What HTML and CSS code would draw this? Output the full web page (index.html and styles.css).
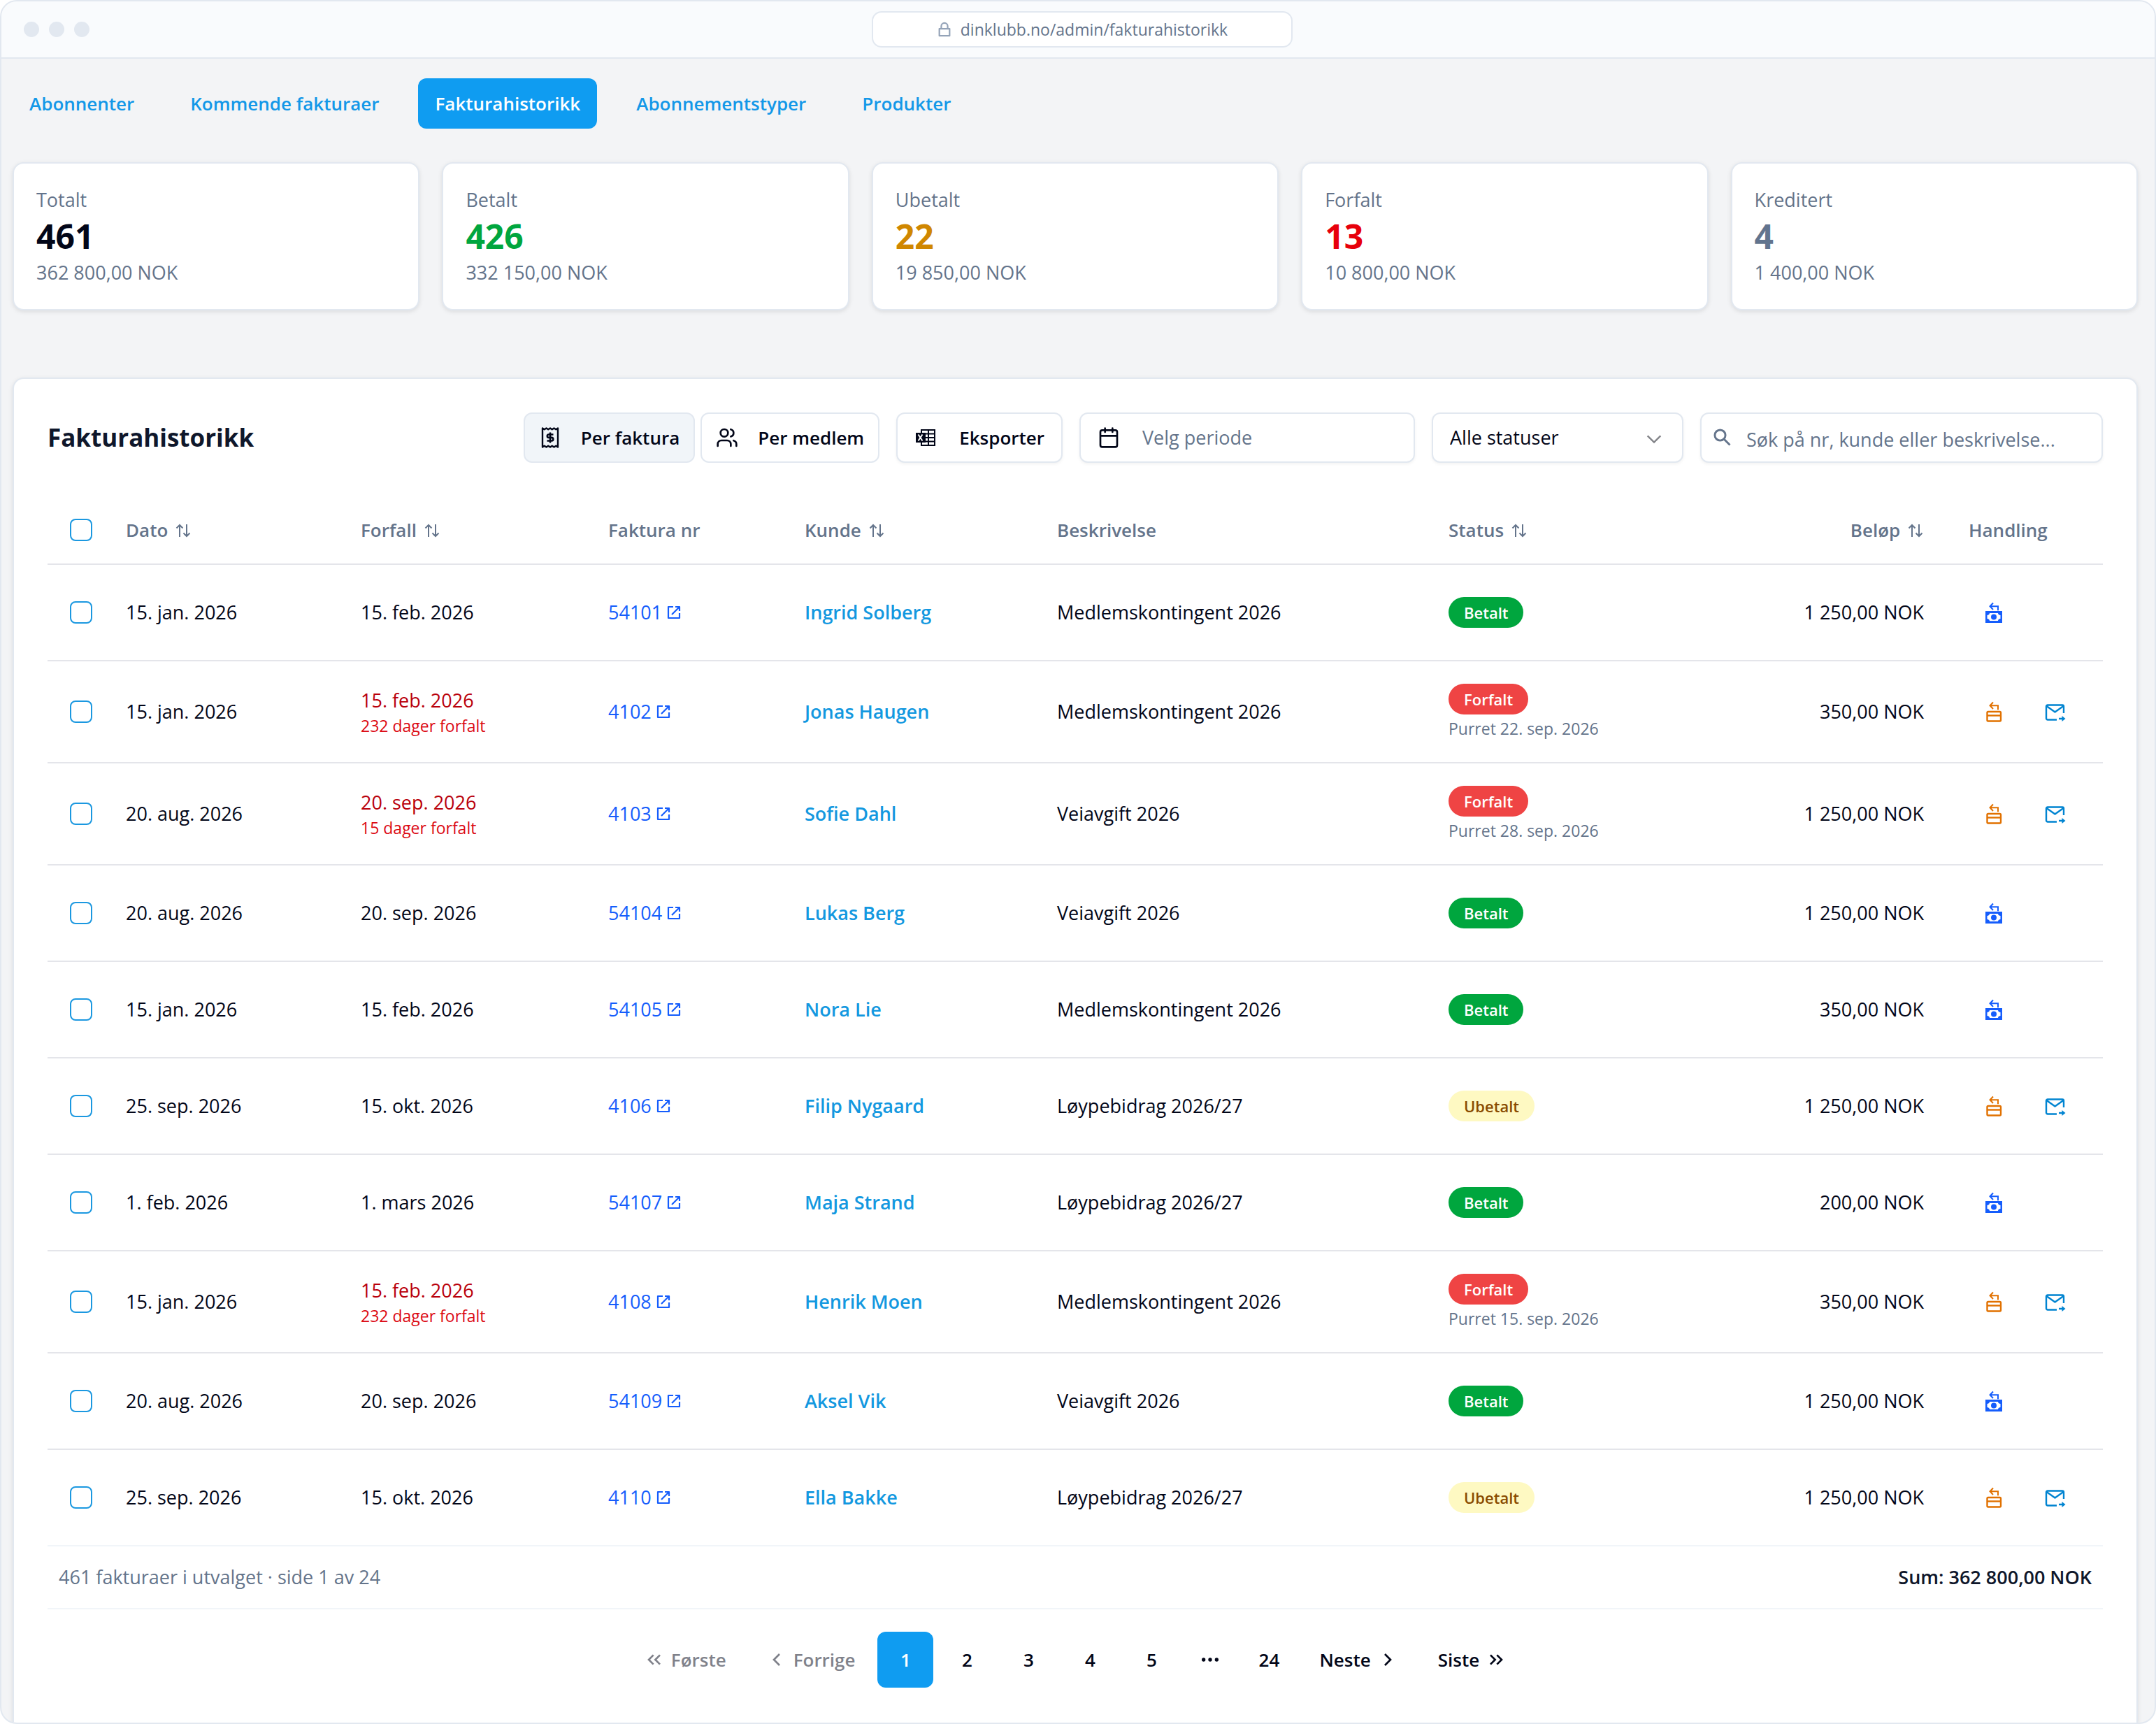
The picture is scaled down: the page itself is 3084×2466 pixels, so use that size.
FILE: index.html
```
<!DOCTYPE html>
<html lang="no">

<head>
    <meta charset="UTF-8">
    <meta name="viewport" content="width=device-width, initial-scale=1">
    <title>Fakturahistorikk</title>
    <link rel="stylesheet" href="styles.css">
</head>

<body>
    <!-- icons -->
    <svg class="sprite" aria-hidden="true">
        <symbol id="i-lock" viewBox="0 0 24 24"><path d="M4 11h16v11H4zM7 11V7a5 5 0 0 1 10 0v4" fill="none" stroke="currentColor" stroke-width="2.4" stroke-linejoin="round"/></symbol>
        <symbol id="i-receipt" viewBox="0 0 32 32"><g fill="none" stroke="currentColor" stroke-width="2.4" stroke-linejoin="round"><path d="M5 2.500l2.700 1.800L10.500 2.500l2.700 1.800L16 2.500l2.700 1.800 2.800-1.800 2.800 1.800L27 2.500v27l-2.700-1.800-2.800 1.800-2.800-1.800L16 29.500l-2.800-1.800-2.700 1.800-2.800-1.800L5 29.500z"/><path d="M20.500 11.500h-6.500a2.200 2.200 0 0 0 0 4.400h4a2.300 2.300 0 0 1 0 4.600h-6.500M16 8.500v15" stroke-width="2.600"/></g></symbol>
        <symbol id="i-users" viewBox="0 0 24 24"><g fill="none" stroke="currentColor" stroke-width="2" stroke-linecap="round" stroke-linejoin="round"><path d="M16 21v-2a4 4 0 0 0-4-4H6a4 4 0 0 0-4 4v2"/><circle cx="9" cy="7" r="4"/><path d="M22 21v-2a4 4 0 0 0-3-3.870M16 3.130a4 4 0 0 1 0 7.750"/></g></symbol>
        <symbol id="i-excel" viewBox="0 0 32 32"><path d="M10 5h19v22H10zM10 10.500h19M10 16h19M10 21.500h19M20 5v22" fill="none" stroke="currentColor" stroke-width="2"/><path d="M2 9h14v14H2z" fill="currentColor"/><path d="M5.500 11.500l6 9M11.500 11.500l-6 9" stroke="#fff" stroke-width="2"/></symbol>
        <symbol id="i-calendar" viewBox="0 0 24 24"><path d="M5 4h14a2 2 0 0 1 2 2v14a2 2 0 0 1-2 2H5a2 2 0 0 1-2-2V6a2 2 0 0 1 2-2zM3 10h18M8 2v4M16 2v4" fill="none" stroke="currentColor" stroke-width="2" stroke-linecap="round"/></symbol>
        <symbol id="i-down" viewBox="0 0 24 24"><path d="M4 8l8 8 8-8" fill="none" stroke="currentColor" stroke-width="2"/></symbol>
        <symbol id="i-search" viewBox="0 0 24 24"><g fill="none" stroke="currentColor" stroke-width="2.500"><circle cx="9" cy="9" r="6.500"/><path d="M13.500 13.500L21 21"/></g></symbol>
        <symbol id="i-sort" viewBox="0 0 24 24"><path d="M7 21V4M2.500 8.500L7 4l4.500 4.500M17 3v17M12.500 15.500L17 20l4.500-4.500" fill="none" stroke="currentColor" stroke-width="2"/></symbol>
        <symbol id="i-open" viewBox="0 0 24 24"><path d="M11 4H4v16h16v-7M14 4h6v6M20 4L9 15" fill="none" stroke="currentColor" stroke-width="2.200" stroke-linejoin="round"/></symbol>
        <symbol id="i-refund" viewBox="0 0 32 32"><path d="M15 2.500L10.500 7.300l4.500 4.700M10.500 7.300H22v6" fill="none" stroke="currentColor" stroke-width="2"/><path d="M4 14h24v17H4zM10 17c0 1.600-1.600 3-3.500 3v5c1.900 0 3.500 1.400 3.500 3h12c0-1.600 1.600-3 3.500-3v-5c-1.900 0-3.500-1.400-3.500-3z" fill="currentColor" fill-rule="evenodd"/><circle cx="16" cy="22.500" r="4" fill="currentColor"/></symbol>
        <symbol id="i-credit" viewBox="0 0 32 32"><path d="M15 2.500L10.500 7.300l4.500 4.700M10.500 7.300H22v6" fill="none" stroke="currentColor" stroke-width="2"/><rect x="6.500" y="16" width="19.500" height="13.500" rx="1.500" fill="none" stroke="currentColor" stroke-width="2.400"/><path d="M6 21.500h20" stroke="currentColor" stroke-width="2.400"/></symbol>
        <symbol id="i-mail" viewBox="0 0 32 32"><path d="M18 27.500H5a2 2 0 0 1-2-2v-17a2 2 0 0 1 2-2h21a2 2 0 0 1 2 2V18M3.500 8L15.500 16.500 27.500 8M21 26h5" fill="none" stroke="currentColor" stroke-width="2.400"/><path d="M25.500 22l5 4-5 4z" fill="currentColor"/></symbol>
        <symbol id="i-left" viewBox="0 0 24 24"><path d="M15 18l-6-6 6-6" fill="none" stroke="currentColor" stroke-width="2"/></symbol>
        <symbol id="i-right" viewBox="0 0 24 24"><path d="M9 18l6-6-6-6" fill="none" stroke="currentColor" stroke-width="2"/></symbol>
        <symbol id="i-first" viewBox="0 0 24 24"><path d="M11 17l-5-5 5-5M18 17l-5-5 5-5" fill="none" stroke="currentColor" stroke-width="2"/></symbol>
        <symbol id="i-last" viewBox="0 0 24 24"><path d="M6 17l5-5-5-5M13 17l5-5-5-5" fill="none" stroke="currentColor" stroke-width="2"/></symbol>
        <symbol id="i-dots" viewBox="0 0 24 24"><g fill="currentColor"><circle cx="5" cy="12" r="2"/><circle cx="12" cy="12" r="2"/><circle cx="19" cy="12" r="2"/></g></symbol>
    </svg>

    <div class="window">
        <header class="titlebar">
            <div class="dots"><span></span><span></span><span></span></div>
            <div class="address"><svg><use href="#i-lock"/></svg>dinklubb.no/admin/fakturahistorikk</div>
            <div class="titlebar-end"></div>
        </header>

        <main class="content">
            <nav class="tabs">
                <a href="#">Abonnenter</a>
                <a href="#">Kommende fakturaer</a>
                <a href="#" class="active">Fakturahistorikk</a>
                <a href="#">Abonnementstyper</a>
                <a href="#">Produkter</a>
            </nav>

            <section class="stats">
                <div class="stat"><span>Totalt</span><strong>461</strong><span>362 800,00 NOK</span></div>
                <div class="stat"><span>Betalt</span><strong class="green">426</strong><span>332 150,00 NOK</span></div>
                <div class="stat"><span>Ubetalt</span><strong class="yellow">22</strong><span>19 850,00 NOK</span></div>
                <div class="stat"><span>Forfalt</span><strong class="red">13</strong><span>10 800,00 NOK</span></div>
                <div class="stat"><span>Kreditert</span><strong class="gray">4</strong><span>1 400,00 NOK</span></div>
            </section>

            <section class="panel">
                <div class="toolbar">
                    <h1>Fakturahistorikk</h1>
                    <div class="filters">
                        <div class="toggle">
                            <button type="button" class="btn selected"><svg><use href="#i-receipt"/></svg>Per faktura</button>
                            <button type="button" class="btn"><svg><use href="#i-users"/></svg>Per medlem</button>
                        </div>
                        <button type="button" class="btn wide"><svg><use href="#i-excel"/></svg>Eksporter</button>
                        <button type="button" class="btn wide period"><svg><use href="#i-calendar"/></svg><span>Velg periode</span></button>
                        <div class="select">
                            <select aria-label="Status">
                                <option>Alle statuser</option>
                                <option>Betalt</option>
                                <option>Ubetalt</option>
                                <option>Forfalt</option>
                            </select>
                            <svg><use href="#i-down"/></svg>
                        </div>
                        <div class="search">
                            <svg><use href="#i-search"/></svg>
                            <input type="text" aria-label="Søk" placeholder="Søk på nr, kunde eller beskrivelse...">
                        </div>
                    </div>
                </div>

                <table class="invoices">
                    <colgroup>
                        <col class="c-check"><col class="c-date"><col class="c-due"><col class="c-nr"><col class="c-customer"><col><col class="c-status"><col class="c-amount"><col class="c-action">
                    </colgroup>
                    <thead>
                        <tr>
                            <th><input type="checkbox" aria-label="Velg alle"></th>
                            <th>Dato <svg><use href="#i-sort"/></svg></th>
                            <th>Forfall <svg><use href="#i-sort"/></svg></th>
                            <th>Faktura nr</th>
                            <th>Kunde <svg><use href="#i-sort"/></svg></th>
                            <th>Beskrivelse</th>
                            <th>Status <svg><use href="#i-sort"/></svg></th>
                            <th class="amount">Beløp <svg><use href="#i-sort"/></svg></th>
                            <th>Handling</th>
                        </tr>
                    </thead>
                    <tbody>
                        <tr>
                            <td><input type="checkbox" aria-label="Velg 54101"></td>
                            <td>15. jan. 2026</td>
                            <td>15. feb. 2026</td>
                            <td><a href="#" class="nr">54101<svg><use href="#i-open"/></svg></a></td>
                            <td><a href="#" class="customer">Ingrid Solberg</a></td>
                            <td>Medlemskontingent 2026</td>
                            <td><div class="status"><span class="badge paid">Betalt</span></div></td>
                            <td class="amount">1 250,00 NOK</td>
                            <td><div class="actions"><button type="button" class="refund" aria-label="Refunder"><svg><use href="#i-refund"/></svg></button></div></td>
                        </tr>
                        <tr>
                            <td><input type="checkbox" aria-label="Velg 4102"></td>
                            <td>15. jan. 2026</td>
                            <td><div class="late">15. feb. 2026<small>232 dager forfalt</small></div></td>
                            <td><a href="#" class="nr">4102<svg><use href="#i-open"/></svg></a></td>
                            <td><a href="#" class="customer">Jonas Haugen</a></td>
                            <td>Medlemskontingent 2026</td>
                            <td><div class="status"><span class="badge overdue">Forfalt</span><small>Purret 22. sep. 2026</small></div></td>
                            <td class="amount">350,00 NOK</td>
                            <td><div class="actions"><button type="button" class="credit" aria-label="Krediter"><svg><use href="#i-credit"/></svg></button><button type="button" class="send" aria-label="Send"><svg><use href="#i-mail"/></svg></button></div></td>
                        </tr>
                        <tr>
                            <td><input type="checkbox" aria-label="Velg 4103"></td>
                            <td>20. aug. 2026</td>
                            <td><div class="late">20. sep. 2026<small>15 dager forfalt</small></div></td>
                            <td><a href="#" class="nr">4103<svg><use href="#i-open"/></svg></a></td>
                            <td><a href="#" class="customer">Sofie Dahl</a></td>
                            <td>Veiavgift 2026</td>
                            <td><div class="status"><span class="badge overdue">Forfalt</span><small>Purret 28. sep. 2026</small></div></td>
                            <td class="amount">1 250,00 NOK</td>
                            <td><div class="actions"><button type="button" class="credit" aria-label="Krediter"><svg><use href="#i-credit"/></svg></button><button type="button" class="send" aria-label="Send"><svg><use href="#i-mail"/></svg></button></div></td>
                        </tr>
                        <tr>
                            <td><input type="checkbox" aria-label="Velg 54104"></td>
                            <td>20. aug. 2026</td>
                            <td>20. sep. 2026</td>
                            <td><a href="#" class="nr">54104<svg><use href="#i-open"/></svg></a></td>
                            <td><a href="#" class="customer">Lukas Berg</a></td>
                            <td>Veiavgift 2026</td>
                            <td><div class="status"><span class="badge paid">Betalt</span></div></td>
                            <td class="amount">1 250,00 NOK</td>
                            <td><div class="actions"><button type="button" class="refund" aria-label="Refunder"><svg><use href="#i-refund"/></svg></button></div></td>
                        </tr>
                        <tr>
                            <td><input type="checkbox" aria-label="Velg 54105"></td>
                            <td>15. jan. 2026</td>
                            <td>15. feb. 2026</td>
                            <td><a href="#" class="nr">54105<svg><use href="#i-open"/></svg></a></td>
                            <td><a href="#" class="customer">Nora Lie</a></td>
                            <td>Medlemskontingent 2026</td>
                            <td><div class="status"><span class="badge paid">Betalt</span></div></td>
                            <td class="amount">350,00 NOK</td>
                            <td><div class="actions"><button type="button" class="refund" aria-label="Refunder"><svg><use href="#i-refund"/></svg></button></div></td>
                        </tr>
                        <tr>
                            <td><input type="checkbox" aria-label="Velg 4106"></td>
                            <td>25. sep. 2026</td>
                            <td>15. okt. 2026</td>
                            <td><a href="#" class="nr">4106<svg><use href="#i-open"/></svg></a></td>
                            <td><a href="#" class="customer">Filip Nygaard</a></td>
                            <td>Løypebidrag 2026/27</td>
                            <td><div class="status"><span class="badge unpaid">Ubetalt</span></div></td>
                            <td class="amount">1 250,00 NOK</td>
                            <td><div class="actions"><button type="button" class="credit" aria-label="Krediter"><svg><use href="#i-credit"/></svg></button><button type="button" class="send" aria-label="Send"><svg><use href="#i-mail"/></svg></button></div></td>
                        </tr>
                        <tr>
                            <td><input type="checkbox" aria-label="Velg 54107"></td>
                            <td>1. feb. 2026</td>
                            <td>1. mars 2026</td>
                            <td><a href="#" class="nr">54107<svg><use href="#i-open"/></svg></a></td>
                            <td><a href="#" class="customer">Maja Strand</a></td>
                            <td>Løypebidrag 2026/27</td>
                            <td><div class="status"><span class="badge paid">Betalt</span></div></td>
                            <td class="amount">200,00 NOK</td>
                            <td><div class="actions"><button type="button" class="refund" aria-label="Refunder"><svg><use href="#i-refund"/></svg></button></div></td>
                        </tr>
                        <tr>
                            <td><input type="checkbox" aria-label="Velg 4108"></td>
                            <td>15. jan. 2026</td>
                            <td><div class="late">15. feb. 2026<small>232 dager forfalt</small></div></td>
                            <td><a href="#" class="nr">4108<svg><use href="#i-open"/></svg></a></td>
                            <td><a href="#" class="customer">Henrik Moen</a></td>
                            <td>Medlemskontingent 2026</td>
                            <td><div class="status"><span class="badge overdue">Forfalt</span><small>Purret 15. sep. 2026</small></div></td>
                            <td class="amount">350,00 NOK</td>
                            <td><div class="actions"><button type="button" class="credit" aria-label="Krediter"><svg><use href="#i-credit"/></svg></button><button type="button" class="send" aria-label="Send"><svg><use href="#i-mail"/></svg></button></div></td>
                        </tr>
                        <tr>
                            <td><input type="checkbox" aria-label="Velg 54109"></td>
                            <td>20. aug. 2026</td>
                            <td>20. sep. 2026</td>
                            <td><a href="#" class="nr">54109<svg><use href="#i-open"/></svg></a></td>
                            <td><a href="#" class="customer">Aksel Vik</a></td>
                            <td>Veiavgift 2026</td>
                            <td><div class="status"><span class="badge paid">Betalt</span></div></td>
                            <td class="amount">1 250,00 NOK</td>
                            <td><div class="actions"><button type="button" class="refund" aria-label="Refunder"><svg><use href="#i-refund"/></svg></button></div></td>
                        </tr>
                        <tr>
                            <td><input type="checkbox" aria-label="Velg 4110"></td>
                            <td>25. sep. 2026</td>
                            <td>15. okt. 2026</td>
                            <td><a href="#" class="nr">4110<svg><use href="#i-open"/></svg></a></td>
                            <td><a href="#" class="customer">Ella Bakke</a></td>
                            <td>Løypebidrag 2026/27</td>
                            <td><div class="status"><span class="badge unpaid">Ubetalt</span></div></td>
                            <td class="amount">1 250,00 NOK</td>
                            <td><div class="actions"><button type="button" class="credit" aria-label="Krediter"><svg><use href="#i-credit"/></svg></button><button type="button" class="send" aria-label="Send"><svg><use href="#i-mail"/></svg></button></div></td>
                        </tr>
                    </tbody>
                </table>

                <div class="summary">
                    <span>461 fakturaer i utvalget · side 1 av 24</span>
                    <strong>Sum: 362 800,00 NOK</strong>
                </div>

                <nav class="pagination">
                    <button type="button" disabled><svg><use href="#i-first"/></svg>Første</button>
                    <button type="button" disabled><svg><use href="#i-left"/></svg>Forrige</button>
                    <button type="button" class="page active">1</button>
                    <button type="button" class="page">2</button>
                    <button type="button" class="page">3</button>
                    <button type="button" class="page">4</button>
                    <button type="button" class="page">5</button>
                    <span class="more"><svg><use href="#i-dots"/></svg></span>
                    <button type="button" class="page">24</button>
                    <button type="button">Neste<svg><use href="#i-right"/></svg></button>
                    <button type="button">Siste<svg><use href="#i-last"/></svg></button>
                </nav>
            </section>
        </main>
    </div>
</body>
</html>
```
FILE: styles.css
```
* {
    box-sizing: border-box;
}

body {
    margin: 0;
    background-color: #fff;
    color: #020618;
    font-family: "Open Sans", "Noto Sans", sans-serif;
    font-size: 27px;
    line-height: 40px;
}

a {
    text-decoration: none;
}

svg {
    display: block;
    flex-shrink: 0;
    width: 32px;
    height: 32px;
}

button, input, select {
    font: inherit;
    color: inherit;
}

.sprite {
    position: absolute;
    width: 0;
    height: 0;
}

/* window frame */
.window {
    display: flex;
    flex-direction: column;
    height: 100vh;
    border: 2px solid #e2e8f0;
    border-radius: 24px;
    background-color: #f3f4f6;
    overflow: hidden;
}

.titlebar {
    display: flex;
    align-items: center;
    justify-content: space-between;
    flex-shrink: 0;
    height: 82px;
    padding: 0 32px;
    border-bottom: 2px solid #e2e8f0;
    background-color: #f9fbfd;
}

.dots {
    display: flex;
    gap: 14px;
}

.dots span {
    width: 22px;
    height: 22px;
    border-radius: 50%;
    background-color: #e2e8f0;
}

.address {
    display: flex;
    align-items: center;
    justify-content: center;
    gap: 12px;
    width: 602px;
    height: 52px;
    border: 2px solid #e2e8f0;
    border-radius: 14px;
    background-color: #fff;
    color: #64748b;
    font-size: 23px;
}

.address svg {
    width: 22px;
    height: 22px;
    color: #94a3b8;
}

.titlebar-end {
    width: 82px;
}

.content {
    display: flex;
    flex-direction: column;
    flex: 1;
    padding: 28px 24px 0 16px;
}

/* tabs */
.tabs {
    display: flex;
    gap: 32px;
    margin-bottom: 48px;
}

.tabs a {
    padding: 16px 24px;
    border-radius: 12px;
    color: #1398e8;
    font-weight: 600;
    font-size: 26px;
}

.tabs .active {
    background-color: #0f9cf1;
    color: #fff;
}

/* key figures */
.stats {
    display: grid;
    grid-template-columns: repeat(5, 1fr);
    gap: 32px;
    margin-bottom: 96px;
}

.stat {
    display: flex;
    flex-direction: column;
    padding: 32px;
    border: 2px solid #e2e8f0;
    border-radius: 16px;
    background-color: #fff;
    box-shadow: 0 2px 6px rgba(0, 0, 0, 0.1);
    color: #64748b;
}

.stat strong {
    color: #020618;
    font-size: 48px;
    line-height: 64px;
}

.stat .green {
    color: #00a63e;
}

.stat .yellow {
    color: #d08700;
}

.stat .red {
    color: #e7000b;
}

.stat .gray {
    color: #62748e;
}

/* invoice panel */
.panel {
    flex: 1;
    padding: 48px;
    border: 2px solid #e2e8f0;
    border-bottom: 0;
    border-radius: 16px 16px 0 0;
    background-color: #fff;
    box-shadow: 0 2px 6px rgba(0, 0, 0, 0.1);
}

.toolbar {
    display: flex;
    align-items: center;
    justify-content: space-between;
    margin-bottom: 48px;
}

.toolbar h1 {
    margin: 0;
    color: #0f172b;
    font-size: 35px;
    line-height: 56px;
}

.filters {
    display: flex;
    gap: 24px;
}

.toggle {
    display: flex;
    gap: 8px;
}

.btn {
    display: flex;
    align-items: center;
    gap: 28px;
    height: 72px;
    padding: 0 20px;
    border: 2px solid #e2e8f0;
    border-radius: 12px;
    background-color: #fff;
    font-weight: 600;
    font-size: 26px;
}

.btn.selected {
    background-color: #f1f5f9;
}

.btn.wide {
    gap: 32px;
    padding: 0 24px;
    box-shadow: 0 2px 4px rgba(0, 0, 0, 0.05);
}

.btn.period {
    width: 480px;
    font-weight: 400;
    font-size: 27px;
}

.btn.period span {
    color: #64748b;
}

.select, .search {
    position: relative;
}

.select {
    width: 360px;
}

.search {
    width: 576px;
}

.select select, .search input {
    width: 100%;
    height: 72px;
    border: 2px solid #e2e8f0;
    border-radius: 12px;
    background-color: #fff;
    box-shadow: 0 2px 4px rgba(0, 0, 0, 0.05);
}

.select select {
    appearance: none;
    padding: 0 24px;
}

.select svg {
    position: absolute;
    top: 24px;
    right: 28px;
    width: 28px;
    height: 28px;
    color: #838489;
    pointer-events: none;
}

.search input {
    padding: 4px 24px 0 64px;
}

.search input::placeholder {
    color: #64748b;
    opacity: 1;
}

.search svg {
    position: absolute;
    top: 22px;
    left: 18px;
    width: 28px;
    height: 28px;
    color: #64748b;
}

/* table */
.invoices {
    width: 100%;
    border-collapse: separate;
    border-spacing: 0;
    table-layout: fixed;
}

.c-check { width: 80px; }
.c-date { width: 336px; }
.c-due { width: 354px; }
.c-nr { width: 281px; }
.c-customer { width: 361px; }
.c-status { width: 373px; }
.c-amount { width: 371px; }
.c-action { width: 224px; }

.invoices th {
    height: 98px;
    padding: 0 32px;
    border-bottom: 2px solid #e4e5ea;
    color: #64748b;
    font-weight: 600;
    font-size: 26px;
    text-align: left;
    white-space: nowrap;
}

.invoices th svg {
    display: inline-block;
    width: 24px;
    height: 24px;
    margin-left: 3px;
    vertical-align: -3px;
}

.invoices td {
    height: 138px;
    padding: 0 32px;
    border-bottom: 2px solid #e4e5ea;
    white-space: nowrap;
}

.invoices tbody tr:last-child td {
    height: 136px;
    border-bottom: 0;
}

.invoices th:first-child, .invoices td:first-child {
    padding-right: 0;
}

.invoices .amount {
    text-align: right;
}

.invoices input {
    display: block;
    appearance: none;
    width: 32px;
    height: 32px;
    margin: 0;
    border: 2px solid #1b98e0;
    border-radius: 8px;
    background-color: #fff;
}

.nr {
    display: flex;
    align-items: center;
    gap: 5px;
    color: #155dfc;
}

.nr svg {
    width: 24px;
    height: 24px;
}

.customer {
    color: #1398e0;
    font-weight: 600;
}

.late {
    padding: 36px 0;
    color: #b9000b;
}

.late small {
    display: block;
    color: #dc0a14;
    font-size: 23px;
    line-height: 32px;
}

.status {
    display: flex;
    flex-direction: column;
    align-items: flex-start;
    gap: 4px;
}

.status small {
    color: #64748b;
    font-size: 23px;
    line-height: 32px;
}

.badge {
    padding: 6px 22px;
    border-radius: 22px;
    color: #fff;
    font-weight: 600;
    font-size: 22px;
    line-height: 32px;
}

.badge.paid {
    background-color: #00a63e;
}

.badge.overdue {
    background-color: #ef4444;
}

.badge.unpaid {
    background-color: #fef9c2;
    color: #894b00;
}

.actions {
    display: flex;
    gap: 16px;
}

.actions button {
    display: flex;
    align-items: center;
    justify-content: center;
    width: 72px;
    height: 72px;
    padding: 0;
    border: 0;
    background: none;
}

.refund {
    color: #155dfc;
}

.actions .refund {
    color: #155dfc;
}

.actions .credit {
    color: #e17100;
}

.actions .send {
    color: #0084d1;
}

/* footer */
.summary {
    display: flex;
    align-items: center;
    justify-content: space-between;
    height: 92px;
    padding: 0 16px;
    border-top: 2px solid #f1f5f9;
    border-bottom: 2px solid #f1f5f9;
    color: #64748b;
}

.summary strong {
    color: #0f172b;
    font-weight: 600;
}

.pagination {
    display: flex;
    justify-content: center;
    gap: 8px;
    margin-top: 32px;
}

.pagination button {
    display: flex;
    align-items: center;
    justify-content: center;
    gap: 8px;
    height: 80px;
    padding: 0 24px;
    border: 0;
    border-radius: 12px;
    background: none;
    font-weight: 600;
    font-size: 26px;
}

.pagination button:disabled {
    opacity: 0.5;
}

.pagination .page {
    width: 80px;
    padding: 0;
}

.pagination .active {
    background-color: #0f9cf1;
    color: #fff;
}

.more {
    display: flex;
    align-items: center;
    justify-content: center;
    width: 72px;
}
```
